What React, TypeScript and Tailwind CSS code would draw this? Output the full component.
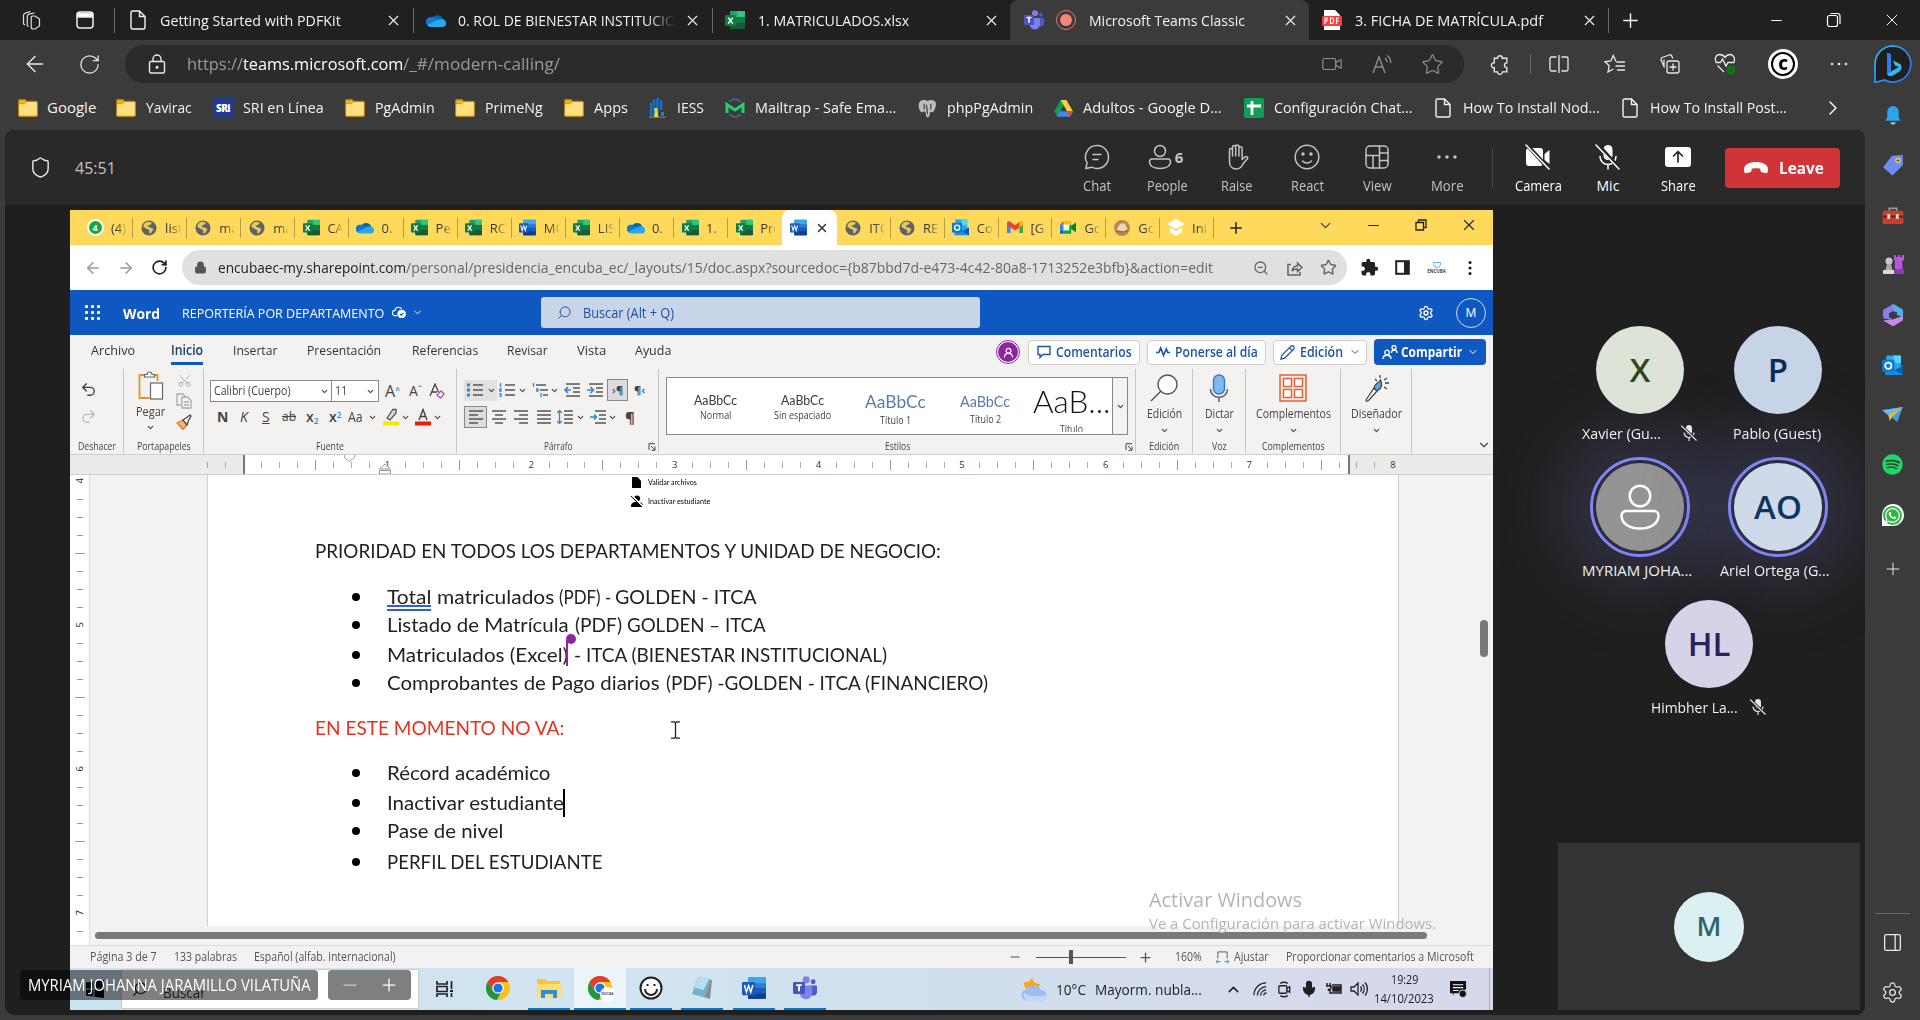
import { useLayoutEffect, useRef, type ReactNode } from 'react';
import {
  ArrowLeft, ArrowRight, ChevronDown, ChevronRight, ChevronUp, Lock, Mic, Minus, PanelRight,
  Plus, RotateCw, Scissors, Search, Settings, Shield, Star, Undo2, Redo2, Video, X, ZoomOut,
} from 'lucide-react';
import { FaSpotify, FaWhatsapp } from 'react-icons/fa';
import { MdExtension } from 'react-icons/md';

/* Label squeezed or stretched to the width of its slot. */
function Fit({ className = '', children }: { className?: string; children: ReactNode }) {
  const outer = useRef<HTMLSpanElement>(null);
  const inner = useRef<HTMLSpanElement>(null);
  useLayoutEffect(() => {
    const fit = () => {
      if (!outer.current || !inner.current) return;
      const w = inner.current.offsetWidth;
      if (w) inner.current.style.transform = `scaleX(${outer.current.clientWidth / w})`;
    };
    fit();
    document.fonts?.ready.then(fit);
  }, []);
  return (
    <span ref={outer} className={`block shrink-0 whitespace-nowrap ${className}`}>
      <span ref={inner} className="inline-block origin-left">{children}</span>
    </span>
  );
}

type P = { className?: string };

/* ---------- product icons ---------- */
const Excel = ({ className = '' }: P) => (
  <svg viewBox="0 0 20 20" className={`shrink-0 ${className}`}>
    <rect x="5" y="1" width="15" height="18" rx="1" fill="#21a366" />
    <rect x="12" y="1" width="8" height="6" fill="#33c481" />
    <rect x="5" y="7" width="15" height="6" fill="#107c41" />
    <rect x="5" y="13" width="15" height="6" rx="1" fill="#185c37" />
    <rect x="0" y="5" width="11" height="11" rx="1" fill="#107c41" />
    <path d="M3.2 7.6l4.6 6M7.8 7.6l-4.6 6" stroke="#fff" strokeWidth="1.5" />
  </svg>
);
const Word = ({ className = '' }: P) => (
  <svg viewBox="0 0 20 20" className={`shrink-0 ${className}`}>
    <rect x="5" y="1" width="15" height="18" rx="1" fill="#2b7cd3" />
    <rect x="5" y="1" width="15" height="5" rx="1" fill="#41a5ee" />
    <rect x="5" y="10" width="15" height="9" rx="1" fill="#185abd" />
    <rect x="5" y="14.5" width="15" height="4.5" rx="1" fill="#103f91" />
    <rect x="0" y="5" width="11" height="11" rx="1" fill="#185abd" />
    <path d="M2 7.5l1.7 6 1.8-5.6 1.8 5.6 1.7-6" stroke="#fff" strokeWidth="1.2" fill="none" />
  </svg>
);
const Outlook = ({ className = '' }: P) => (
  <svg viewBox="0 0 20 20" className={`shrink-0 ${className}`}>
    <rect x="4" y="0.5" width="14" height="15" fill="#28a8ea" />
    <rect x="11" y="0.5" width="7" height="7" fill="#50d9ff" />
    <path d="M3 10l8.5 4.5L20 10v9H3z" fill="#1490df" />
    <path d="M20 10l-8 4.8L20 19z" fill="#0a5ea8" />
    <rect x="0" y="4.5" width="12" height="11.5" rx="1" fill="#0f78d4" />
    <circle cx="6" cy="10.2" r="3" fill="none" stroke="#fff" strokeWidth="1.7" />
  </svg>
);
const OneDrive = ({ className = '' }: P) => (
  <svg viewBox="0 0 20 14" className={`shrink-0 ${className}`}>
    <path d="M6 5a6 5.5 0 0 1 11 1.5L11 10z" fill="#0364b8" />
    <path d="M5 4.2a5 5 0 0 1 4 1l7.5 4L3.5 13A4.4 4.4 0 0 1 5 4.2z" fill="#0f78d4" />
    <path d="M15 5.9c3 0 5 1.5 5 4a3.7 3.7 0 0 1-3.5 4H4.4a4 4 0 0 1-3.2-2L12 6.6a5 5 0 0 1 3-.7z" fill="#28a8ea" />
  </svg>
);
const Teams = ({ className = '' }: P) => (
  <svg viewBox="0 0 20 20" className={`shrink-0 ${className}`}>
    <circle cx="16.8" cy="4.8" r="2" fill="#5059c9" />
    <path d="M14 8h5.2c.4 0 .8.4.8.8v4.7a3.2 3.2 0 0 1-6 1.2z" fill="#5059c9" />
    <circle cx="11" cy="3.2" r="3" fill="#7b83eb" />
    <path d="M6 8h9.2c.5 0 .8.4.8.8v5.4a5.2 5.2 0 0 1-10.4 0V8.4z" fill="#7b83eb" />
    <rect x="0" y="5" width="10" height="10" rx="1" fill="#4b53bc" />
    <path d="M2.6 7.6h4.8M5 7.6v5.2" stroke="#fff" strokeWidth="1.5" />
  </svg>
);
const Globe = ({ className = '' }: P) => (
  <svg viewBox="0 0 18 18" className={`shrink-0 ${className}`}>
    <circle cx="9" cy="9" r="8.5" fill="#5f6368" />
    <path d="M2.500 7.500C3 4 6 2 8.500 2l3.500.8-.5 2-2.500.7-1.500 2 4 1.200 2.500 1.500L12.500 13l-2 2.500L9 14l.5-2.500-3-1.500z" fill="#ffd95b" opacity=".85" />
  </svg>
);
const Folder = ({ className = '' }: P) => (
  <svg viewBox="0 0 20 18" className={`shrink-0 ${className}`}>
    <path d="M.6 2A1.5 1.5 0 0 1 2 .6h4.8l2 1.8H18A1.5 1.5 0 0 1 19.400 4v12a1.400 1.400 0 0 1-1.400 1.400H2A1.400 1.400 0 0 1 .6 16z" fill="#ffdf80" stroke="#b8860b" strokeWidth="1.100" />
    <path d="M1 2c0-.6.4-1 1-1h4.600l1.900 1.700-2 1.900H1z" fill="#f5b81c" stroke="#a97a0a" strokeWidth=".6" />
  </svg>
);
const Page = ({ className = '' }: P) => (
  <svg viewBox="0 0 16 20" fill="none" stroke="#f2f2f2" strokeWidth="1.4" className={`shrink-0 ${className}`}>
    <path d="M9.500 1H2.500A1.500 1.500 0 0 0 1 2.500v15A1.500 1.500 0 0 0 2.500 19h11a1.500 1.500 0 0 0 1.500-1.500V6.500zM9.500 1v5.500H15" />
  </svg>
);
const Drive = ({ className = '' }: P) => (
  <svg viewBox="0 0 20 18" className={`shrink-0 ${className}`}>
    <path d="M7 0h3L10 6 3.500 17.500.2 12z" fill="#0f9d58" />
    <path d="M7 0h6l7 12h-6.200z" fill="#ffcd40" />
    <path d="M6.200 12H20l-3 5.800H3z" fill="#4285f4" />
    <path d="M14 12h6l-3 5.800z" fill="#ea4335" />
  </svg>
);
const Chrome = ({ className = '' }: P) => (
  <svg viewBox="0 0 24 24" className={`shrink-0 ${className}`}>
    <circle cx="12" cy="12" r="12" fill="#fbc116" />
    <path d="M1.600 6A12 12 0 0 1 22.400 6H12l-4.800 8.800z" fill="#e33b2e" />
    <path d="M1.600 6a12 12 0 0 0 9 18l5.600-9.200H7z" fill="#229342" />
    <circle cx="12" cy="12" r="5.800" fill="#fff" />
    <circle cx="12" cy="12" r="4.600" fill="#1a73e8" />
  </svg>
);
const WhatsCount = () => (
  <span className="flex size-[17px] shrink-0 items-center justify-center rounded-full border-2 border-white bg-[#14a84b] text-[9px] font-bold leading-none text-white">4</span>
);
const Gmail = ({ className = '' }: P) => (
  <svg viewBox="0 0 20 16" className={`shrink-0 ${className}`}>
    <path d="M0 2.500V15h4.500V7z" fill="#4285f4" /><path d="M20 2.500V15h-4.500V7z" fill="#34a853" />
    <path d="M0 2.600C0 .6 2.200-.6 4 .8l6 4.500 6-4.500c1.800-1.400 4-.2 4 1.800V5L10 12 0 5z" fill="#ea4335" />
    <path d="M15.500 1.200L16 .8c1.800-1.400 4-.2 4 1.800V5l-4.500 3.200z" fill="#fbbc04" />
  </svg>
);
const Meet = ({ className = '' }: P) => (
  <svg viewBox="0 0 20 16" className={`shrink-0 ${className}`}>
    <path d="M0 4.500L4.500 0v4.500z" fill="#ea4335" /><path d="M4.500 0H14v4.500H4.500z" fill="#fbbc04" />
    <path d="M0 4.500h4.500v7H0z" fill="#2684fc" /><path d="M0 11.500h4.500V16H1.500A1.500 1.500 0 0 1 0 14.500z" fill="#0066da" />
    <path d="M4.500 11.500H11V6l3-2v12H4.500z" fill="#00ac47" /><path d="M14 6l6-4v12l-6-4z" fill="#00832d" />
    <rect x="4.500" y="4.500" width="7" height="7" fill="#fff" />
  </svg>
);

/* ---------- outer browser ---------- */
const Sep = ({ className = '' }: P) => <span className={`w-px shrink-0 ${className}`} />;

function EdgeTab({ className, icon, title, active, sep }: { className: string; icon: ReactNode; title: ReactNode; active?: boolean; sep?: boolean }) {
  return (
    <div className={`flex h-full shrink-0 items-center ${active ? 'rounded-t-lg bg-[#3b3b3b]' : ''} ${className}`}>
      <Sep className={sep ? 'h-[25px] bg-[#6b6b6b]' : 'h-[25px]'} />
      {icon}
      {title}
      <X className="ml-auto size-[17px] shrink-0" strokeWidth={1.600} />
    </div>
  );
}

function TabStrip() {
  return (
    <div className="flex h-10 items-center bg-[#202020] text-[15px] leading-5 text-[#f3f3f3]">
      <div className="flex w-[114px] shrink-0 items-center pl-[22px]">
        <svg viewBox="0 0 20 20" className="size-5" fill="none" stroke="#ddd" strokeWidth="1.200">
          <path d="M12 5.500h2.500l4.500 3v7L14.500 18.500h-1.800a2 2 0 0 1-2-2V8a2 2 0 0 1 1.300-2.500zM8 16L6.800 15V5.800C6.800 4.300 8 3.500 9 3.300l5-.8M4.500 14.500L3 13.500V5c0-1.500 1-2.300 2.200-2.600L10 1" transform="translate(-1.500 .5)" />
        </svg>
        <svg viewBox="0 0 18 18" className="ml-[34px] size-[18px]" fill="none" stroke="#eee" strokeWidth="1.500">
          <rect x="1" y="1" width="16" height="16" rx="3" /><path d="M1.500 2.500h15v3.500h-15z" fill="#fff" />
        </svg>
      </div>
      <EdgeTab sep className="w-[299px] pr-[11px]" icon={<Page className="ml-[15px] h-5 w-4" />} title={<Fit className="-mt-px ml-[14px] w-[181px]">Getting Started with PDFKit</Fit>} />
      <EdgeTab sep className="w-[299px] pr-[11px]" icon={<OneDrive className="ml-3 w-5" />}
        title={<div className="-mt-px ml-3 w-[218px] shrink-0 [mask-image:linear-gradient(90deg,#000_190px,transparent_217px)]"><Fit className="w-[218px]">0. ROL DE BIENESTAR INSTITUCIO</Fit></div>} />
      <EdgeTab sep className="w-[298px] pr-[10px]" icon={<Excel className="ml-3 size-5" />} title={<Fit className="-mt-px ml-[13px] w-[151px]">1. MATRICULADOS.xlsx</Fit>} />
      <EdgeTab active className="w-[299px] pr-[10px]"
        icon={<><Teams className="ml-[13px] size-5" /><span className="ml-3 flex size-5 shrink-0 items-center justify-center rounded-full border-[1.500px] border-[#f1707b]"><span className="size-[12px] rounded-full bg-[#f4867c]" /></span></>}
        title={<Fit className="-mt-px ml-[13px] w-[156px]">Microsoft Teams Classic</Fit>} />
      <EdgeTab className="w-[299px] pr-[10px]"
        icon={<svg viewBox="0 0 20 20" className="ml-3 size-5 shrink-0"><path d="M2 0h11l5 5v15H2z" fill="#fff" /><rect x="0" y="6" width="20" height="10" rx="1" fill="#f83e3e" /><path d="M3 14V8h2v3H3M8.500 8v5.500H10a1.500 1.500 0 0 0 1.500-1.500V9.500A1.500 1.500 0 0 0 10 8zM14.500 14V8H17M14.500 11H17" stroke="#fff" strokeWidth="1.200" fill="none" /></svg>}
        title={<Fit className="-mt-px ml-[13px] w-[188px]">3. FICHA DE MATRÍCULA.pdf</Fit>} />
      <Sep className="h-[25px] bg-[#6b6b6b]" />
      <Plus className="ml-[10px] size-[23px]" strokeWidth={1.500} />
      <Minus className="ml-auto size-[17px]" strokeWidth={1.400} />
      <svg viewBox="0 0 16 16" className="ml-[41px] size-4" fill="none" stroke="#fff" strokeWidth="1.200"><rect x="1.500" y="3.500" width="10" height="11" rx="2" /><path d="M4.500 1.500h7a2.500 2.500 0 0 1 2.500 2.500v8" /></svg>
      <X className="ml-[40px] mr-[18px] size-5" strokeWidth={1.200} />
    </div>
  );
}

function AddressRow() {
  return (
    <div className="flex h-12 items-center text-[#e8e8e8]">
      <ArrowLeft className="ml-[22px] size-[26px]" strokeWidth={1.300} />
      <RotateCw className="ml-[30px] size-[23px]" strokeWidth={1.300} />
      <div className="ml-6 flex h-[38px] w-[1339px] shrink-0 items-center rounded-[19px] bg-[#2b2b2b] text-[17px] leading-6 text-[#9a9a9a]">
        <svg viewBox="0 0 18 20" className="ml-[23px] h-5 w-[18px]" fill="none" stroke="#e8e8e8" strokeWidth="1.400"><rect x="1.500" y="7.500" width="15" height="11.500" rx="1.500" /><path d="M5 7.500V5a4 4 0 0 1 8 0v2.500" /><circle cx="9" cy="13.200" r=".8" fill="#fff" /></svg>
        <Fit className="-mt-px ml-[21px] w-[56px]">https://</Fit>
        <Fit className="-mt-px w-[160px] text-white">teams.microsoft.com</Fit>
        <Fit className="-mt-px w-[157px]">/_#/modern-calling/</Fit>
        <Video className="ml-auto size-[22px] text-[#8d8d8d]" strokeWidth={1.300} />
        <span className="ml-[29px] flex w-[24px] items-start text-[#8d8d8d]">
          <svg viewBox="0 0 22 20" className="h-5 w-[22px]" fill="none" stroke="#8d8d8d" strokeWidth="1.400"><path d="M1 19L7 3l6 16M3.200 13h7.600M13 4a5 5 0 0 1 2 4M15 1.500A8 8 0 0 1 18.500 9" /></svg>
        </span>
        <Star className="ml-[25px] mr-[20px] size-[23px] text-[#8d8d8d]" strokeWidth={1.300} />
      </div>
      <svg viewBox="0 0 20 20" className="ml-[25px] size-[21px]" fill="none" stroke="#e8e8e8" strokeWidth="1.300"><path d="M5 4h3a2.300 2.300 0 0 1 4.600 0H17v4.500a2 2 0 0 0 0 4.500v4h-4.200a2.400 2.400 0 0 1-4.800 0H5v-4a2.300 2.300 0 1 1 0-4.500z" /></svg>
      <Sep className="ml-5 h-5 bg-[#6b6b6b]" />
      <svg viewBox="0 0 20 18" className="ml-[18px] h-[18px] w-5" fill="none" stroke="#e8e8e8" strokeWidth="1.300"><path d="M7.500 2H2.500A1.500 1.500 0 0 0 1 3.500v11A1.500 1.500 0 0 0 2.500 16h5M12.500 2h5A1.500 1.500 0 0 1 19 3.500v11a1.500 1.500 0 0 1-1.500 1.500h-5M10 0v18" /></svg>
      <svg viewBox="0 0 22 20" className="ml-[35px] h-5 w-[22px]" fill="none" stroke="#e8e8e8" strokeWidth="1.300"><path d="M12 7.500L9.300 1.500 6.800 7 1 7.800l4.200 4L4 18l5.300-3M12.500 8H21M11.500 12H21M13 16h8" /></svg>
      <svg viewBox="0 0 20 20" className="ml-[34px] size-5" fill="none" stroke="#e8e8e8" strokeWidth="1.300"><rect x="7" y="7" width="12" height="12" rx="2" /><path d="M13 9.500v7M9.500 13h7M4.500 13.500L1.200 6.200A2 2 0 0 1 2.200 3.500l7-2.500a2 2 0 0 1 2.600 1l1 2.500M4 5.500V12" /></svg>
      <svg viewBox="0 0 22 22" className="ml-[34px] size-[22px]" fill="none" stroke="#e8e8e8" strokeWidth="1.300"><path d="M2 9C0 4 3 1.500 5.500 1.500S10 3 11 4.500C12 3 13.800 1.500 16 1.500c3 0 5.500 3 4 7.500M1.500 9.500h5l2-3.500 3.500 7 2-3.500h6.500M3.500 12.500L10 19" /><circle cx="17" cy="17" r="4.500" fill="#0e7a0d" stroke="none" /><path d="M15 17l1.500 1.500L19 15.500" stroke="#333" strokeWidth="1" /></svg>
      <span className="ml-[32px] flex size-[30px] items-center justify-center rounded-full bg-white"><span className="flex size-[24px] items-center justify-center rounded-full border-[2.500px] border-black text-[15px] font-extrabold leading-none text-black">C</span></span>
      <svg viewBox="0 0 18 4" className="ml-[32px] w-[18px]" fill="#e8e8e8"><circle cx="2" cy="2" r="1.300" /><circle cx="9" cy="2" r="1.300" /><circle cx="16" cy="2" r="1.300" /></svg>
      <svg viewBox="0 0 38 38" className="ml-auto mr-2 size-[38px]">
        <defs><linearGradient id="bing" x1="0" y1="0" x2="1" y2="1"><stop offset="0" stopColor="#2bc3f5" /><stop offset="1" stopColor="#2a6cf0" /></linearGradient></defs>
        <path d="M19 1a18 18 0 1 1-8.500 34L1 37.500V19A18 18 0 0 1 19 1z" fill="#1f1f1f" stroke="url(#bing)" strokeWidth="1.700" />
        <path d="M13 7.500l4 1.500v17.500l-4 3z" fill="#2b7cf0" /><path d="M13 29l14-8.500c1.500 3-.5 5.500-3 7l-5 3c-2 1.200-5 .8-6-1.500z" fill="#36b5f4" /><path d="M19 15.500l6 3c2 1 2.500 2.500 2 4l-6-2z" fill="#1fd0e8" />
      </svg>
    </div>
  );
}

const bookmarks: { icon: ReactNode; gap: string; label: string; size: string }[] = [
  { icon: <Folder className="ml-[18px] h-[18px] w-5" />, gap: 'ml-[9px]', label: 'Google', size: 'w-[49px]' },
  { icon: <Folder className="ml-5 h-[18px] w-5" />, gap: 'ml-[10px]', label: 'Yavirac', size: 'w-[46px]' },
  { icon: <span className="ml-[21px] flex size-5 shrink-0 items-center justify-center bg-[#213a8f] text-[10px] font-extrabold tracking-[-0.600px] text-white">SRi</span>, gap: 'ml-[10px]', label: 'SRI en Línea', size: 'w-[81px]' },
  { icon: <Folder className="ml-[21px] h-[18px] w-5" />, gap: 'ml-[10px]', label: 'PgAdmin', size: 'w-[60px]' },
  { icon: <Folder className="ml-[20px] h-[18px] w-5" />, gap: 'ml-[10px]', label: 'PrimeNg', size: 'w-[58px]' },
  { icon: <Folder className="ml-[21px] h-[18px] w-5" />, gap: 'ml-[10px]', label: 'Apps', size: 'w-[34px]' },
  { icon: <svg viewBox="0 0 17 20" className="ml-[21px] h-5 w-[17px] shrink-0"><path d="M2 19V5M5 19V1M8.500 16V0M12 12V2" stroke="#1473c8" strokeWidth="2.400" /><path d="M0 19.500h17" stroke="#1fa53a" strokeWidth="1.500" /><circle cx="7" cy="11.500" r="1.800" fill="#f5d328" /><path d="M5 19l1-6h2.500l1 6z" fill="#f5d328" /><path d="M12 18v-4h3v4z" fill="#2b7cd3" /></svg>, gap: 'ml-[11px]', label: 'IESS', size: 'w-[27px]' },
  { icon: <svg viewBox="0 0 20 20" className="ml-[21px] size-5 shrink-0" fill="none"><path d="M4 3.500l6-3 6 3M4 16.500l6 3 6-3" stroke="#4a5b80" strokeWidth="2" /><path d="M2 15V6.500l8 5.500 8-5.500V15" stroke="#22d172" strokeWidth="3" /></svg>, gap: 'ml-[10px]', label: 'Mailtrap - Safe Ema...', size: 'w-[141px]' },
  { icon: <svg viewBox="0 0 20 20" className="ml-[22px] size-[19px] shrink-0"><path d="M10 2C6 0 .5 1 .8 7c0 4 2 7 3.500 7 1 0 1.500-1 2.200-1L8 14c.3 3 .5 5.500 2.200 5.500S12.500 17 12.700 13.500c2.300 1 3.300.5 4.300-1.500C18.500 9 19.500 6 18.500 3.500 17 .5 12.500.5 10 2z" fill="#bdbdbd" /><path d="M6.500 5v6M13.500 5v6M9 6l1 10" stroke="#3b3b3b" strokeWidth="1.200" /></svg>, gap: 'ml-[10px]', label: 'phpPgAdmin', size: 'w-[86px]' },
  { icon: <Drive className="ml-[21px] h-[17px] w-[19px]" />, gap: 'ml-[10px]', label: 'Adultos - Google D...', size: 'w-[139px]' },
  { icon: <svg viewBox="0 0 20 20" className="ml-[22px] size-5 shrink-0"><rect width="20" height="20" rx="2" fill="#0f9d58" /><path d="M3 8h14M8 3v14" stroke="#fff" strokeWidth="2.800" /></svg>, gap: 'ml-[10px]', label: 'Configuración Chat...', size: 'w-[139px]' },
  { icon: <Page className="ml-[22px] h-5 w-4" />, gap: 'ml-3', label: 'How To Install Nod...', size: 'w-[137px]' },
  { icon: <Page className="ml-[22px] h-5 w-4" />, gap: 'ml-3', label: 'How To Install Post...', size: 'w-[137px]' },
];

function Bookmarks() {
  return (
    <div className="flex h-[42px] items-center pb-[2px] text-[15px] leading-5 text-[#f3f3f3]">
      {bookmarks.map((b) => (
        <div key={b.label} className="flex shrink-0 items-center">
          {b.icon}
          <Fit className={`-mt-[2px] ${b.gap} ${b.size}`}>{b.label}</Fit>
        </div>
      ))}
      <ChevronRight className="ml-auto mr-[20px] size-6" strokeWidth={1.500} />
    </div>
  );
}

function Sidebar() {
  return (
    <aside className="flex w-[55px] shrink-0 flex-col items-center pt-[17px] text-[#e8e8e8]">
      <svg viewBox="0 0 20 22" className="h-[21px] w-5"><path d="M10 1a6 6 0 0 1 6 6v6l2 3.500H2L4 13V7a6 6 0 0 1 6-6z" fill="#2ba3f0" /><path d="M7 18h6l-1.500 2.500h-3z" fill="#bbb" /></svg>
      <svg viewBox="0 0 20 20" className="mt-[28px] size-[22px]"><path d="M9 1.500L18 1a1 1 0 0 1 1 1v8L9.500 19.500 1 12z" fill="#6f8cf5" /><circle cx="14.500" cy="6" r="2.500" fill="#f7c948" /><path d="M14.500 4.500v3M13 6h3" stroke="#555" strokeWidth=".8" /></svg>
      <svg viewBox="0 0 22 20" className="mt-[30px] h-[19px] w-[22px]"><path d="M7 5V2.500h8V5" fill="none" stroke="#999" strokeWidth="1.800" /><rect x="0" y="5" width="22" height="14" rx="2" fill="#c8402c" /><rect x="0" y="10" width="22" height="2.500" fill="#7d2418" /><rect x="5" y="8.500" width="3" height="5" fill="#ddd" /><rect x="14" y="8.500" width="3" height="5" fill="#ddd" /></svg>
      <svg viewBox="0 0 22 22" className="mt-[28px] size-[22px]"><path d="M12 2h2v2h2V2h2v2h2V2h2v5l-2 1.500.8 8h-8L13 8.500 12 7z" fill="#b556dc" /><circle cx="7" cy="8" r="3.600" fill="#c9c9c9" /><path d="M5 11h4l1.500 6H3.500z" fill="#aaa" /><path d="M1 17h12v4H1z" fill="#d8d8d8" /><path d="M12 17h10v4H12z" fill="#8a3bb5" /></svg>
      <svg viewBox="0 0 22 22" className="mt-[29px] size-[22px]"><path d="M11 0l4 2v6l-5 2v6l-8-1.500A3 3 0 0 1 1 12V6z" fill="#8a7fe8" /><path d="M11 0l9 5a2 2 0 0 1 1 2v6l-6-2V8l-4-3z" fill="#4cb1f0" /><path d="M21 12v3a2 2 0 0 1-1 2l-8 4.700a2 2 0 0 1-2 0L1 16.500l9-1z" fill="#c38ae6" /><path d="M11 7l4 2.300v4L11 15.500l-4-2.300v-4z" fill="#3b3b3b" /></svg>
      <Outlook className="mt-[29px] size-[21px]" />
      <svg viewBox="0 0 22 18" className="mt-[30px] h-[17px] w-[23px]"><path d="M0 4.500L22 1l-6 16-6-5z" fill="#3ba0f2" /><path d="M0 4.500L22 1 7 10z" fill="#61bdf7" /><path d="M22 1L6.500 9.500 8 16l2.500-4z" fill="#f5b52a" /></svg>
      <FaSpotify className="mt-[31px] size-[21px] text-[#1ed760]" />
      <span className="mt-[29px] flex size-[22px] items-center justify-center rounded-full rounded-bl-sm bg-white"><span className="flex size-[19px] items-center justify-center rounded-full bg-[#2cb742]"><FaWhatsapp className="size-[17px] text-white" /></span></span>
      <Plus className="mt-[33px] size-5" strokeWidth={1.200} />
      <span className="mt-auto h-px w-[35px] bg-[#6b6b6b]" />
      <PanelRight className="mt-[18px] size-[21px]" strokeWidth={1.500} />
      <Settings className="mb-[16px] mt-[28px] size-[23px]" strokeWidth={1.300} />
    </aside>
  );
}

/* ---------- call header ---------- */
function CallButton({ className, icon, label, size, bright }: { className: string; icon: ReactNode; label: string; size: string; bright?: boolean }) {
  return (
    <div className={`flex shrink-0 flex-col items-center pt-[5px] ${bright ? 'text-white' : 'text-[#c4c2c0]'} ${className}`}>
      <span className="flex h-[26px] items-center justify-center">{icon}</span>
      <Fit className={`mt-[6px] text-[14px] leading-5 ${size}`}>{label}</Fit>
    </div>
  );
}

const S = ({ children, className = 'size-[26px]' }: { children: ReactNode; className?: string }) => (
  <svg viewBox="0 0 26 26" fill="none" stroke="currentColor" strokeWidth="1.500" strokeLinecap="round" strokeLinejoin="round" className={`shrink-0 ${className}`}>{children}</svg>
);

function CallHeader() {
  return (
    <header className="flex h-[75px] items-center bg-[#292929]">
      <Shield className="ml-[24px] size-[23px] text-[#e6e6e6]" strokeWidth={1.500} />
      <Fit className="ml-[23px] w-[41px] text-[16px] leading-6 text-[#c4c2c0]">45:51</Fit>
      <div className="ml-auto flex items-center">
        <CallButton className="w-[70px]" label="Chat" size="w-[28px]" icon={<S><path d="M13 1.500a11.500 11.500 0 1 1-5.300 21.700L1.800 24.500l1.300-5.600A11.500 11.500 0 0 1 13 1.500zM9 10.500h8M9 15.500h5" /></S>} />
        <CallButton className="w-[70px]" label="People" size="w-[41px]"
          icon={<span className="-ml-1 flex items-center"><S><circle cx="13" cy="7" r="5.500" /><path d="M5 15h16a2.500 2.500 0 0 1 2.500 2.500c0 4.500-4.500 7-10.500 7s-10.500-2.500-10.500-7A2.500 2.500 0 0 1 5 15z" /></S><b className="ml-[2px] text-[15px]">6</b></span>} />
        <CallButton className="w-[70px]" label="Raise" size="w-[32px]" icon={<S><path d="M5.500 15V6a1.500 1.500 0 0 1 3 0V3.200a1.600 1.600 0 0 1 3.200 0V2.500a1.600 1.600 0 0 1 3.200 0v1.800a1.600 1.600 0 0 1 3.200 0V15.500l2.900-2.600c1.200-1 3-.2 2.700 1.300L19 20c-1.500 3-3.300 5-6.500 5-4.500 0-7-3-7-7zM8.500 6v6M11.700 3.500V12M14.900 4.500V12" /></S>} />
        <CallButton className="w-[70px]" label="React" size="w-[33px]" icon={<S><circle cx="13" cy="13" r="11.800" /><path d="M8.500 17a6 6 0 0 0 9 0" /><circle cx="9" cy="10" r="1" fill="currentColor" /><circle cx="17" cy="10" r="1" fill="currentColor" /></S>} />
        <CallButton className="w-[70px]" label="View" size="w-[29px]" icon={<S><rect x="2" y="2" width="22" height="22" rx="4" /><path d="M15.500 2v22M2 11.500h13.500M15.500 9H24M15.500 16.500H24M9 11.500V24" /></S>} />
        <CallButton className="w-[70px]" label="More" size="w-[33px]" icon={<S><circle cx="5" cy="13" r="1" fill="currentColor" /><circle cx="13" cy="13" r="1" fill="currentColor" /><circle cx="21" cy="13" r="1" fill="currentColor" /></S>} />
        <Sep className="ml-[10px] h-10 bg-[#484644]" />
        <CallButton bright className="ml-[10px] w-[70px]" label="Camera" size="w-[47px]" icon={<S><path d="M3.500 4H15a3 3 0 0 1 3 3v12a3 3 0 0 1-3 3H4a3 3 0 0 1-3-3V7a3 3 0 0 1 2.500-3z" fill="currentColor" stroke="none" /><path d="M19.500 10l5-4v14l-5-4z" fill="currentColor" stroke="none" /><path d="M2 1l22 24" stroke="#292929" strokeWidth="4" /><path d="M1 1l23 24" /></S>} />
        <CallButton bright className="w-[70px]" label="Mic" size="w-[23px]" icon={<S><rect x="8.500" y="1" width="9" height="15" rx="4.500" fill="currentColor" stroke="none" /><path d="M5 12.500a8 8 0 0 0 16 0M13 20.500V25" /><path d="M3 1l22 24" stroke="#292929" strokeWidth="4" /><path d="M1 1l23 24" /></S>} />
        <CallButton bright className="w-[70px]" label="Share" size="w-[35px]" icon={<S><rect x="0" y="3" width="26" height="20" rx="3" fill="currentColor" stroke="none" /><path d="M13 18V8M8.500 12L13 7.500l4.500 4.500" stroke="#292929" strokeWidth="1.700" /></S>} />
        <button className="ml-[12px] mr-[25px] flex h-10 w-[115px] items-center rounded bg-[#d13438] text-white">
          <svg viewBox="0 0 24 12" className="ml-[19px] w-6" fill="#fff"><path d="M12 0C6 0 0 2 0 7.500c0 2.500.5 4 2 3.700l4-.9c1.300-.3 1.600-1 1.700-3.500 1.300-.7 7.300-.7 8.600 0 .1 2.500.4 3.200 1.700 3.500l4 .9c1.500.3 2-1.200 2-3.700C24 2 18 0 12 0z" /></svg>
          <Fit className="ml-[11px] w-[45px] text-[16px] font-bold leading-6">Leave</Fit>
        </button>
      </div>
    </header>
  );
}

/* ---------- shared screen ---------- */
const sharedTabs: { icon: ReactNode; text: string }[] = [
  { icon: <WhatsCount />, text: '(4)' },
  { icon: <Globe className="size-4" />, text: 'list' },
  { icon: <Globe className="size-4" />, text: 'ma' },
  { icon: <Globe className="size-4" />, text: 'ma' },
  { icon: <Excel className="size-[17px]" />, text: 'CA' },
  { icon: <OneDrive className="w-[18px]" />, text: '0.' },
  { icon: <Excel className="size-[17px]" />, text: 'Pe' },
  { icon: <Excel className="size-[17px]" />, text: 'RO' },
  { icon: <Word className="size-[17px]" />, text: 'MO' },
  { icon: <Excel className="size-[17px]" />, text: 'LIS' },
  { icon: <OneDrive className="w-[18px]" />, text: '0.' },
  { icon: <Excel className="size-[17px]" />, text: '1.' },
  { icon: <Excel className="size-[17px]" />, text: 'Pro' },
  { icon: <Word className="size-[17px]" />, text: '' },
  { icon: <Globe className="size-4" />, text: 'ITC' },
  { icon: <Globe className="size-4" />, text: 'RE' },
  { icon: <Outlook className="size-[17px]" />, text: 'Co' },
  { icon: <Gmail className="w-4" />, text: '[G' },
  { icon: <Meet className="w-4" />, text: 'Go' },
  { icon: <svg viewBox="0 0 16 16" className="size-4"><circle cx="8" cy="8" r="8" fill="#b98a4d" /><path d="M2.500 10l3-5.500c2-1.500 4-1.500 5.500-.5l2.500 5-3.500 2.500z" fill="#ead7b5" /><path d="M2 10.500c3 2 8 2 12 0" stroke="#8a5f2b" fill="none" /></svg>, text: 'Go' },
  { icon: <svg viewBox="0 0 18 18" className="size-[18px]"><path d="M9 0l9 5-9 5-9-5zM3 8.500l6 3.500 6-3.500V13l-6 4-6-4z" fill="#fff" /></svg>, text: 'Ini' },
];

function SharedTabs() {
  return (
    <div className="flex h-[35px] items-center bg-[#ffd95b] pl-[9px] text-[13px] leading-4 text-[#3c3a2f]">
      {sharedTabs.map((t, i) =>
        t.text === '' ? (
          <div key={i} className="flex h-full w-[55px] shrink-0 items-center rounded-t-lg bg-white">
            <span className="flex w-[33px] shrink-0 justify-center">{t.icon}</span>
            <X className="size-[14px] text-[#333]" strokeWidth={2.500} />
          </div>
        ) : (
          <div key={i} className={`flex h-full shrink-0 items-center ${i < 13 ? 'w-[54.100px]' : 'w-[53.800px]'}`}>
            <span className="flex w-[32px] shrink-0 justify-center">{t.icon}</span>
            <span className="w-[15px] shrink-0 overflow-hidden whitespace-nowrap [mask-image:linear-gradient(90deg,#000_6px,transparent_17px)]">{t.text}</span>
            {i !== 12 && <Sep className="ml-auto h-5 bg-[#b99c43]" />}
          </div>
        ),
      )}
      <Plus className="ml-[13px] size-[18px] text-[#222]" strokeWidth={2} />
      <ChevronDown className="mb-[5px] ml-auto size-[17px] text-[#333]" strokeWidth={1.600} />
      <Minus className="mb-[5px] ml-[31px] size-[17px] text-[#222]" strokeWidth={1.500} />
      <svg viewBox="0 0 12 12" className="mb-[5px] ml-[33px] size-[12px]" fill="none" stroke="#222" strokeWidth="1.300"><path d="M1 3.500h7.500V11H1zM3.500 3.500V1H11v7.500H8.500" /></svg>
      <X className="mb-[5px] ml-[33px] mr-[15px] size-[18px] text-[#222]" strokeWidth={1.500} />
    </div>
  );
}

function SharedAddress() {
  return (
    <div className="flex h-[45px] items-center bg-white">
      <ArrowLeft className="ml-[14px] size-[18px] text-[#999]" />
      <ArrowRight className="ml-[15px] size-[18px] text-[#999]" />
      <RotateCw className="ml-[16px] size-[17px] text-[#222]" strokeWidth={2.400} />
      <div className="ml-[14px] flex h-[35px] w-[1165px] shrink-0 items-center rounded-[18px] bg-[#e0e0e0] text-[15px] leading-5 text-[#63666a]">
        <Lock className="ml-3 size-[13px] text-[#555]" fill="#555" />
        <Fit className="-mt-[2px] ml-[11px] w-[188px] text-[#202124]">encubaec-my.sharepoint.com</Fit>
        <Fit className="-mt-[2px] w-[807px]">{'/personal/presidencia_encuba_ec/_layouts/15/doc.aspx?sourcedoc={b87bbd7d-e473-4c42-80a8-1713252e3bfb}&action=edit'}</Fit>
        <ZoomOut className="ml-[40px] size-4" />
        <svg viewBox="0 0 16 16" className="ml-[18px] size-4" fill="none" stroke="#5f6368" strokeWidth="1.500"><path d="M4 4.500H1v10.500h12v-3M5 11c.5-3.500 2.500-5 5.500-5V3l4.500 4.500-4.500 4V9C8 9 6 9.500 5 11z" /></svg>
        <Star className="ml-[17px] size-[17px]" />
      </div>
      <MdExtension className="ml-[13px] size-[19px] text-[#222]" />
      <svg viewBox="0 0 15 15" className="ml-[16px] size-[15px]"><rect x="1.200" y="1.200" width="12.600" height="12.600" fill="none" stroke="#222" strokeWidth="2" /><rect x="9" y="1" width="5" height="13" fill="#222" /></svg>
      <span className="ml-[17px] flex w-[19px] flex-col items-center text-[4.500px] font-bold leading-[6px] text-[#2b4c63]"><span className="h-[6px] w-2 rounded-b border border-[#66b5d8]" />ENCUBA</span>
      <svg viewBox="0 0 4 16" className="ml-[22px] h-4 w-1" fill="#222"><circle cx="2" cy="2.500" r="1.600" /><circle cx="2" cy="8" r="1.600" /><circle cx="2" cy="13.500" r="1.600" /></svg>
    </div>
  );
}

function WordHeader() {
  return (
    <div className="flex h-[45px] items-center bg-[#1058c1] text-white">
      <span className="ml-[15px] grid size-[15px] shrink-0 grid-cols-3 gap-[3px]">{Array.from({ length: 9 }, (_, i) => <i key={i} className="size-[3px] rounded-[1px] bg-white" />)}</span>
      <Fit className="ml-[23px] w-[37px] text-[15px] font-bold leading-5">Word</Fit>
      <Fit className="ml-[22px] w-[202px] text-[13.500px] leading-5">REPORTERÍA POR DEPARTAMENTO</Fit>
      <svg viewBox="0 0 16 14" className="ml-2 w-[14px]" fill="none" stroke="#fff" strokeWidth="1.300"><path d="M6 11H3.500A3 3 0 0 1 3.500 5 4 4 0 0 1 11 3.500" /><circle cx="11" cy="9" r="4.200" fill="#fff" /><path d="M9 9l1.500 1.500L13 8" stroke="#1058c1" /></svg>
      <ChevronDown className="ml-[6px] size-[11px]" />
      <div className="ml-[118px] flex h-[31px] w-[439px] items-center rounded-[3px] bg-[#c8d4e8] text-[14px] leading-5 text-[#1f4fa0]">
        <Search className="ml-[16px] size-[15px] -scale-x-100" strokeWidth={1.500} />
        <Fit className="ml-[11px] w-[91px]">Buscar (Alt + Q)</Fit>
      </div>
      <Settings className="ml-auto size-[16px]" />
      <span className="ml-[22px] mr-[7px] flex size-[30px] items-center justify-center rounded-full border border-white/80 text-[12px]">M</span>
    </div>
  );
}

const menus: [string, string, boolean?][] = [
  ['Archivo', 'ml-[21px] w-[44px]'], ['Inicio', 'ml-[36px] w-[32px]', true], ['Insertar', 'ml-[30px] w-[44px]'], ['Presentación', 'ml-[30px] w-[74px]'],
  ['Referencias', 'ml-[31px] w-[66px]'], ['Revisar', 'ml-[29px] w-[41px]'], ['Vista', 'ml-[29px] w-[29px]'], ['Ayuda', 'ml-[29px] w-[36px]'],
];

const Chev = ({ className = '' }: P) => <ChevronDown className={`size-[9px] shrink-0 text-[#444] ${className}`} strokeWidth={3} />;

function MenuRow() {
  return (
    <div className="flex h-[34px] items-center text-[13.500px] leading-[18px] text-[#333]">
      {menus.map(([label, cls, on]) => (
        <div key={label} className={`flex h-[30px] shrink-0 items-center self-start ${cls} ${on ? 'border-b-[3px] border-[#1058c1] pt-[2px] font-semibold text-[#1b3d70]' : ''}`}>
          <Fit className="w-full">{label}</Fit>
        </div>
      ))}
      <span className="ml-auto flex size-6 items-center justify-center rounded-full border border-[#8b2aa0] bg-white"><span className="flex size-5 items-center justify-center rounded-full bg-[#8e24a0]"><svg viewBox="0 0 12 12" className="size-[11px]" fill="none" stroke="#fff" strokeWidth="1.300"><circle cx="6" cy="4" r="2.600" /><path d="M1.500 11.500c0-6 9-6 9 0" /></svg></span></span>
      <div className="flex items-center gap-[7px] pl-[8px] pr-[7px] font-semibold text-[#1f55a8]">
        <span className="flex h-[25px] w-[112px] items-center rounded-sm border border-[#d0cecc] bg-white">
          <svg viewBox="0 0 14 14" className="ml-[8px] size-[14px]" fill="none" stroke="#1f55a8" strokeWidth="1.400"><path d="M1 1.500h12v8H6L3 12.500V9.500H1z" /></svg>
          <Fit className="ml-[5px] w-[76px]">Comentarios</Fit>
        </span>
        <span className="flex h-[25px] w-[119px] items-center rounded-sm border border-[#d0cecc] bg-white">
          <svg viewBox="0 0 16 12" className="ml-[8px] w-[15px]" fill="none" stroke="#1f55a8" strokeWidth="1.700"><path d="M0 7h3l2-5 3 8 3-7 1.500 4H15" /></svg>
          <Fit className="ml-[4px] w-[83px]">Ponerse al día</Fit>
        </span>
        <span className="flex h-[25px] w-[94px] items-center rounded-sm border border-[#d0cecc] bg-white">
          <svg viewBox="0 0 16 16" className="ml-[6px] size-[15px]" fill="none" stroke="#1f55a8" strokeWidth="1.400"><path d="M1 15l1-4L11.500 1.500a1.800 1.800 0 0 1 3 3L5 14zM10 3l3 3" /></svg>
          <Fit className="ml-[5px] w-[43px]">Edición</Fit>
          <ChevronDown className="ml-[6px] size-3" />
        </span>
        <span className="flex h-[26px] w-[112px] items-center rounded-sm bg-[#1058c1] font-bold text-white">
          <svg viewBox="0 0 16 14" className="ml-[8px] w-[16px]" fill="none" stroke="#fff" strokeWidth="1.300"><circle cx="5" cy="7.500" r="2.300" /><path d="M1 14c0-5 8-5 8 0" /><circle cx="12" cy="2.500" r="2" /><path d="M9.500 8c0-4 5.500-4 5.500 0" /></svg>
          <Fit className="ml-[3px] w-[61px]">Compartir</Fit>
          <ChevronDown className="ml-[5px] size-3" />
        </span>
      </div>
    </div>
  );
}

function Group({ className, label, size, launcher, children }: { className: string; label: string; size: string; launcher?: boolean; children: ReactNode }) {
  return (
    <div className={`relative flex h-[84px] shrink-0 flex-col border-r border-[#c8c6c4] ${className}`}>
      <div className="h-[71px]">{children}</div>
      <div className="flex justify-center text-[10.500px] leading-[13px] text-[#444]"><Fit className={size}>{label}</Fit></div>
      {launcher && (
        <svg viewBox="0 0 8 8" className="absolute bottom-[2px] right-[2px] size-[8px]" fill="none" stroke="#444"><path d="M1 7V.7h6M3 3l4 4M7 3.500V7.300H3.500" /></svg>
      )}
    </div>
  );
}

/* Paragraph-style line glyphs. */
function Lines({ kind }: { kind: 'bullet' | 'num' | 'multi' | 'out' | 'in' | 'left' | 'center' | 'right' | 'just' | 'space' | 'ind' }) {
  const blue = '#2b88d8';
  const g = '#555';
  return (
    <svg viewBox="0 0 16 14" className="h-[14px] w-4 shrink-0" fill="none" stroke={g} strokeWidth="1.300">
      {kind === 'bullet' && <><path d="M6 2h10M6 7h10M6 12h10" /><path d="M0 2h3M0 7h3M0 12h3" stroke={blue} strokeWidth="3" /></>}
      {kind === 'num' && <><path d="M6 2h10M6 7h10M6 12h10" /><path d="M1.500 0v4M0 6h2v2H0M0 11h2v3H0" stroke={blue} /></>}
      {kind === 'multi' && <><path d="M4 2h10M8 7h8M11 12h5" /><path d="M1.500 0v4M4 6h2v2H4M9 10v4" stroke={blue} /></>}
      {(kind === 'out' || kind === 'in') && <><path d="M2 1h14M9 5h7M9 9h7M2 13h14" />{kind === 'out' ? <path d="M7 7H1M4 4L1 7l3 3" stroke={blue} strokeWidth="1.600" /> : <path d="M0 7h6M3.500 4L6.500 7l-3 3" stroke={blue} strokeWidth="1.600" />}</>}
      {kind === 'left' && <path d="M1 1h14M1 5h9M1 9h14M1 13h9" />}
      {kind === 'center' && <path d="M1 1h14M4 5h8M1 9h14M4 13h8" />}
      {kind === 'right' && <path d="M1 1h14M6 5h9M1 9h14M6 13h9" />}
      {kind === 'just' && <path d="M1 1h14M1 5h14M1 9h14M1 13h14" />}
      {kind === 'space' && <><path d="M7 1h9M7 5h9M7 9h9M7 13h9" /><path d="M2.500 0v14M0 3L2.500.5 5 3M0 11l2.500 2.500L5 11" stroke={blue} /></>}
      {kind === 'ind' && <><path d="M5 1h11M9 5h7M9 9h7M5 13h11" /><path d="M0 7h6M4 4.500L6.500 7 4 9.500" stroke={blue} strokeWidth="1.600" /></>}
    </svg>
  );
}

const bigTools: { group: string; label: string; gsize: string; tool: string; tsize: string; icon: ReactNode }[] = [
  { group: 'w-[57px]', label: 'Edición', gsize: 'w-[30px]', tool: 'Edición', tsize: 'w-[35px]', icon: <svg viewBox="0 0 28 28" className="size-7" fill="none" stroke="#555" strokeWidth="1.400"><circle cx="17.500" cy="10.500" r="9.500" fill="#fff" /><path d="M11 17L1 27" /></svg> },
  { group: 'w-[53px]', label: 'Voz', gsize: 'w-[15px]', tool: 'Dictar', tsize: 'w-[29px]', icon: <svg viewBox="0 0 28 28" className="size-7" fill="none" stroke="#555" strokeWidth="1.400"><rect x="8.500" y="1" width="11" height="19" rx="5.500" fill="#83b9ec" stroke="#2b7cd3" /><path d="M5.500 15c0 11 17 11 17 0M14 23v5" /></svg> },
  { group: 'w-[95px]', label: 'Complementos', gsize: 'w-[63px]', tool: 'Complementos', tsize: 'w-[75px]', icon: <svg viewBox="0 0 28 28" className="size-7" fill="none" stroke="#d9653b" strokeWidth="1.500"><rect x="1" y="1" width="26" height="26" fill="#fbe9e2" /><rect x="4.500" y="4.500" width="8" height="8" fill="#fff" /><rect x="15.500" y="4.500" width="8" height="8" fill="#fff" /><rect x="4.500" y="15.500" width="8" height="8" fill="#fff" /><rect x="15.500" y="15.500" width="8" height="8" fill="#fff" /></svg> },
  { group: 'w-[71px]', label: '', gsize: 'w-[1px]', tool: 'Diseñador', tsize: 'w-[51px]', icon: <svg viewBox="0 0 28 28" className="size-7" fill="none" stroke="#444" strokeWidth="1.300"><path d="M4 26l8-12 3 3-8 9c-1 1-3 2-3 0z" fill="#fff" /><path d="M12 14c0-4 4-4 6.500-8 1 3 2 5 0 8-1.500 2-3 2-3.500 3z" fill="#5ba7e6" /><path d="M13 5l2 2M18 1v3M25 4l-3 2M23 9h4M22 13l3 2" /></svg> },
];

const styles: { box: string; text: string; fit: string; sample: string; label: string; lfit: string }[] = [
  { box: 'ml-[27px] pt-[13px]', text: 'text-[13.500px] leading-[18px] text-[#3a3a3a]', fit: 'w-[43px]', sample: 'AaBbCc', label: 'Normal', lfit: 'w-[31px] -mt-px' },
  { box: 'ml-[37px] pt-[13px]', text: 'text-[13.500px] leading-[18px] text-[#3a3a3a]', fit: 'w-[43px]', sample: 'AaBbCc', label: 'Sin espaciado', lfit: 'w-[57px] -mt-px' },
  { box: 'ml-[34px] pt-[14px]', text: 'mb-[3px] text-[18px] leading-[18px] text-[#5b7bb0]', fit: 'w-[61px]', sample: 'AaBbCc', label: 'Título 1', lfit: 'w-[31px]' },
  { box: 'ml-[34px] pt-[14px]', text: 'mb-[2px] text-[15.500px] leading-[18px] text-[#5b7bb0]', fit: 'w-[50px]', sample: 'AaBbCc', label: 'Título 2', lfit: 'w-[31px]' },
  { box: 'ml-[23px] pt-[9px]', text: 'mb-[6px] text-[31px] font-light leading-[29px] text-[#111]', fit: 'w-[77px]', sample: 'AaB...', label: 'Título', lfit: 'w-[23px] h-[10px] overflow-hidden' },
];

function Ribbon() {
  return (
    <div className="h-[120px] border-b border-[#d0cecc] bg-[#f3f2f1]">
      <MenuRow />
      <div className="flex h-[85px] text-[#444]">
        <Group className="w-[54px]" label="Deshacer" size="w-[38px]">
          <div className="flex flex-col items-center gap-[10px] pr-4 pt-[12px]"><Undo2 className="size-[17px]" /><Redo2 className="size-[17px] text-[#bbb]" /></div>
        </Group>
        <Group className="w-[80px]" label="Portapapeles" size="w-[54px]">
          <div className="flex pl-[12px]">
            <div className="flex w-[29px] flex-col items-center">
              <svg viewBox="0 0 26 30" className="mt-[2px] h-[30px] w-[27px]" fill="none" stroke="#e3962e" strokeWidth="1.800"><path d="M8 4H2v23h10M16 4h4v6" /><path d="M7 6V3.500h2.500a2.500 2.500 0 0 1 5 0H17V6z" stroke="#666" strokeWidth="1.200" fill="#fff" /><rect x="13" y="12" width="12" height="16" fill="#fff" stroke="#666" strokeWidth="1.200" /></svg>
              <Fit className="mt-[3px] w-[29px] text-[12.500px] leading-[15px]">Pegar</Fit>
              <Chev className="mt-[4px]" />
            </div>
            <div className="ml-[11px] flex flex-col items-center gap-[5px] pt-[4px]">
              <Scissors className="size-[15px] -rotate-90 text-[#aaa]" strokeWidth={1.500} />
              <svg viewBox="0 0 16 16" className="size-4" fill="none" stroke="#aaa" strokeWidth="1.300"><path d="M5 12H1V1h6l2 2M6 4h5.500L15 7.500V15H6zM8 9h5M8 12h5" /></svg>
              <svg viewBox="0 0 16 16" className="size-4" fill="none"><path d="M1 9l6-3 4 5-4 4.500z" fill="#f5b26b" stroke="#d9772b" strokeWidth="1.300" /><path d="M7 6l3-2 4-3 1 1-2.500 4.500L11 11z" stroke="#444" strokeWidth="1.300" fill="#fff" /></svg>
            </div>
          </div>
        </Group>
        <Group className="w-[253px]" label="Fuente" size="w-[28px]">
          <div className="flex items-center pl-[6px] pt-[11px]">
            <div className="flex h-[22px] w-[169px] items-center border border-[#8a8886] bg-white text-[12.500px] leading-[16px]">
              <Fit className="ml-[3px] w-[77px]">Calibri (Cuerpo)</Fit><Chev className="ml-[29px]" />
              <span className="ml-[2px] flex h-full w-[47px] items-center border-l border-[#8a8886]"><Fit className="ml-[3px] w-[12px]">11</Fit><Chev className="ml-auto mr-[3px]" /></span>
            </div>
            <span className="ml-[6px] w-[17px] text-[16px] leading-none">A<sup className="text-[8px] font-bold text-[#2b88d8]">^</sup></span>
            <span className="ml-[7px] w-[17px] text-[14px] leading-none">A<sup className="text-[8px] font-bold text-[#2b88d8]">ˇ</sup></span>
            <svg viewBox="0 0 16 16" className="ml-[3px] size-4" fill="none" stroke="#444" strokeWidth="1.300"><path d="M1 13L6 1l3.500 8M3 9h5" /><path d="M8 12l4-4 3 3-3.500 4z" fill="#fff" stroke="#a04fb8" /></svg>
          </div>
          <div className="flex items-center pl-[13px] pt-[5px] text-[14px] leading-[20px]">
            <b className="w-[23px]">N</b><i className="w-[22px]">K</i><span className="w-[20px] underline">S</span><span className="w-[24px] text-[12px] line-through">ab</span>
            <span className="w-[23px] font-semibold">x<sub className="text-[8px] text-[#2b88d8]">2</sub></span><span className="w-[19px] font-semibold">x<sup className="text-[8px] text-[#2b88d8]">2</sup></span>
            <Fit className="w-[15px]">Aa</Fit><Chev className="ml-[5px]" />
            <svg viewBox="0 0 16 18" className="ml-[6px] h-[18px] w-4" fill="none" stroke="#555" strokeWidth="1.300"><path d="M4 10l6-8.500h3V5L7 12z" fill="#ddd" /><path d="M0 15.500h16" stroke="#f7e600" strokeWidth="4" /></svg>
            <Chev className="ml-[2px]" />
            <svg viewBox="0 0 16 18" className="ml-[5px] h-[18px] w-4" fill="none" stroke="#444" strokeWidth="1.400"><path d="M4 12L8 1.500 12 12M5.500 8.500h5" /><path d="M0 15.500h16" stroke="#f01a0a" strokeWidth="4" /></svg>
            <Chev className="ml-[2px]" />
          </div>
        </Group>
        <Group className="w-[202px]" label="Párrafo" size="w-[28px]" launcher>
          <div className="mt-[10px] flex h-[22px] items-center pl-[7px]">
            <span className="flex h-[21px] w-[33px] items-center bg-[#e3e1df] pl-[3px]"><Lines kind="bullet" /><Chev className="ml-[4px]" /></span>
            <span className="ml-[2px] flex items-center"><Lines kind="num" /><Chev className="ml-[3px]" /></span>
            <span className="ml-[5px] flex items-center"><Lines kind="multi" /><Chev className="ml-[2px]" /></span>
            <span className="ml-[5px]"><Lines kind="out" /></span><span className="ml-[7px]"><Lines kind="in" /></span>
            <span className="ml-[4px] flex h-[22px] w-[21px] items-center justify-center border border-[#8a8886] bg-[#dedcda] text-[11px] font-bold"><span className="text-[#2b88d8]">›</span>¶</span>
            <span className="ml-[6px] text-[11px] font-bold">¶<span className="text-[#2b88d8]">‹</span></span>
          </div>
          <div className="mt-[5px] flex h-[22px] items-center pl-[7px]">
            <span className="flex h-[22px] w-[23px] items-center justify-center border border-[#8a8886] bg-[#dedcda]"><Lines kind="left" /></span>
            <span className="ml-[4px]"><Lines kind="center" /></span><span className="ml-[6px]"><Lines kind="right" /></span><span className="ml-[7px]"><Lines kind="just" /></span>
            <span className="ml-[5px] flex items-center"><Lines kind="space" /><Chev className="ml-[3px]" /></span>
            <span className="ml-[5px] flex items-center"><Lines kind="ind" /><Chev className="ml-[2px]" /></span>
            <span className="ml-[8px] text-[15px] font-bold leading-none">¶</span>
          </div>
        </Group>
        <Group className="w-[477px]" label="Estilos" size="w-[25px]" launcher>
          <div className="ml-[7px] mt-[8px] flex h-[58px] w-[462px] border border-[#8a8886] bg-white">
            {styles.map((s) => (
              <div key={s.label} className={`flex shrink-0 flex-col items-center ${s.box}`}>
                <Fit className={`font-['Lato',sans-serif] ${s.text} ${s.fit}`}>{s.sample}</Fit>
                <Fit className={`text-[11px] leading-[13px] text-[#444] ${s.lfit}`}>{s.label}</Fit>
              </div>
            ))}
            <span className="ml-auto flex w-[15px] items-center justify-center border-l border-[#8a8886] bg-[#f3f2f1]"><Chev /></span>
          </div>
        </Group>
        {bigTools.map((t) => (
          <Group key={t.tool} className={t.group} label={t.label} size={t.gsize}>
            <div className="flex flex-col items-center pt-[5px]">
              {t.icon}
              <Fit className={`mt-[4px] text-[12.500px] leading-[16px] ${t.tsize}`}>{t.tool}</Fit>
              <Chev className="mt-[4px]" />
            </div>
          </Group>
        ))}
        <ChevronDown className="ml-auto mr-[2px] mt-[69px] size-[14px]" />
      </div>
    </div>
  );
}

function HorizontalRuler() {
  return (
    <div className="flex h-5 items-center overflow-hidden border-b border-[#d0cecc] bg-[linear-gradient(90deg,#ebebeb_0_173px,#777_173px_175px,#fff_175px_1278px,#777_1278px_1280px,#ebebeb_1280px)] pl-[129px] text-[9.500px] leading-none text-[#333]">
      {Array.from({ length: 67 }, (_, i) => i - 2).map((k) => (
        <span key={k} className="relative flex h-[10px] w-[17.960px] shrink-0 items-center justify-center">
          {k > 0 && k % 8 === 0 ? k / 8 : k === 0 ? null : <i className={k % 4 === 0 ? 'h-[10px] w-px bg-[#999]' : 'h-[6px] w-px bg-[#aaa]'} />}
          {k === 8 && (
            <>
              <svg viewBox="0 0 12 8" className="absolute -top-[5px] left-[-35px] w-[11px]" fill="#fff" stroke="#999"><path d="M.5 0v3L6 7l5.500-4V0" /></svg>
              <svg viewBox="0 0 12 12" className="absolute left-0 top-[3px] w-[12px]" fill="#fff" stroke="#999"><path d="M.5 6L6 1l5.500 5zM.5 7.500h11v3.500H.5z" /></svg>
            </>
          )}
        </span>
      ))}
    </div>
  );
}

function VerticalRuler() {
  return (
    <div className="h-full w-5 shrink-0 overflow-hidden border-r border-[#ddd] bg-white text-[9.500px] leading-none text-[#222]">
      <div className="-mt-[3px] flex flex-col">
        {Array.from({ length: 26 }, (_, k) => (
          <span key={k} className="flex h-[18px] shrink-0 items-center justify-center">
            {k % 8 === 0 ? <span className="-rotate-90">{4 + k / 8}</span> : <i className={k % 4 === 0 ? 'h-px w-[10px] bg-[#999]' : 'h-px w-[6px] bg-[#999]'} />}
          </span>
        ))}
      </div>
    </div>
  );
}

/* One bullet line; each part is a run of text with its own slot. */
function Item({ className = '', parts, extra }: { className?: string; parts: [string, string][]; extra?: ReactNode }) {
  return (
    <li className={`flex h-7 items-center ${className}`}>
      <span className="ml-[144px] size-[8px] shrink-0 rounded-full bg-black" />
      <span className="relative ml-[27px] flex">
        {parts.map(([cls, text]) => <Fit key={text} className={cls}>{text}</Fit>)}
        {extra}
      </span>
    </li>
  );
}

function Document() {
  return (
    <div className="relative flex h-[470px] bg-[#f2f2f2]">
      <VerticalRuler />
      <div className="flex-1">
        <div className="flex h-[451px]">
          <div className="ml-[117px] w-[1192px] border-x border-[#cfcfcf] bg-white font-['Lato',sans-serif] text-[19.500px] leading-7 text-[#222] [font-variant-ligatures:none]">
            <div className="flex h-[14px] items-center text-[7px] leading-none text-black"><svg viewBox="0 0 10 12" className="ml-[424px] h-[11px] w-[9px]"><path d="M0 0h6l4 4v8H0z" /></svg><Fit className="ml-[7px] w-[49px]">Validar archivos</Fit></div>
            <div className="mt-[5px] flex h-[14px] items-center text-[7px] leading-none text-black"><svg viewBox="0 0 12 12" className="ml-[423px] size-[12px]"><circle cx="6" cy="3.500" r="3" /><path d="M0 12c0-5 3-5 6-5s6 0 6 5z" /><path d="M0 0l12 12" stroke="#fff" strokeWidth="2" /><path d="M0 1l11 11" stroke="#000" /></svg><Fit className="ml-[5px] w-[62px]">Inactivar estudiante</Fit></div>
            <Fit className="ml-[107px] mt-[29px] w-[626px]">PRIORIDAD EN TODOS LOS DEPARTAMENTOS Y UNIDAD DE NEGOCIO:</Fit>
            <ul>
              <Item className="mt-[18px]" parts={[['w-[44px]', 'Total'], ['ml-[6px] w-[117px]', 'matriculados'], ['ml-[5px] w-[52px]', '(PDF) -'], ['ml-[4px] w-[142px]', 'GOLDEN - ITCA']]}
                extra={<span className="absolute left-0 top-[22px] h-[6px] w-[44px] border-y-2 border-[#2f5de0]" />} />
              <Item parts={[['w-[182px]', 'Listado de Matrícula'], ['ml-[6px] w-[47px]', '(PDF)'], ['ml-[5px] w-[139px]', 'GOLDEN – ITCA']]} />
              <Item className="mt-[2px]" parts={[['w-[181px]', 'Matriculados (Excel)'], ['ml-[6px] w-[313px]', '- ITCA (BIENESTAR INSTITUCIONAL)']]}
                extra={<span className="absolute -top-[1px] left-[179px] h-[26px] w-[2px] bg-[#8e24a0]"><i className="absolute -top-[6px] left-0 size-[10px] rounded-full bg-[#8e24a0]" /></span>} />
              <Item parts={[['w-[273px]', 'Comprobantes de Pago diarios'], ['ml-[6px] w-[322px]', '(PDF) -GOLDEN - ITCA (FINANCIERO)']]} />
            </ul>
            <div className="relative mt-[17px] text-[#e8321f]">
              <Fit className="ml-[107px] w-[249px]">EN ESTE MOMENTO NO VA:</Fit>
              <svg viewBox="0 0 9 18" className="absolute left-[463px] top-[7px] h-[18px] w-[9px]" fill="none" stroke="#222" strokeWidth="1.300"><path d="M0 .8h3.500L4.500 2l1-1.200H9M4.500 2v14M0 17.200h3.500l1-1.200 1 1.200H9" /></svg>
            </div>
            <ul>
              <Item className="mt-[17px]" parts={[['w-[164px]', 'Récord académico']]} />
              <Item className="mt-[2px]" parts={[['w-[177px]', 'Inactivar estudiante']]} extra={<span className="absolute left-[176px] top-0 h-7 w-[1.500px] bg-black" />} />
              <Item parts={[['w-[116px]', 'Pase de nivel']]} />
              <Item className="mt-[3px]" parts={[['w-[215px]', 'PERFIL DEL ESTUDIANTE']]} />
            </ul>
          </div>
          <span className="ml-[81px] mt-[145px] h-[37px] w-2 rounded bg-[#777]" />
        </div>
        <div className="ml-[5px] mt-[6px] h-[7px] w-[1332px] rounded bg-[#7a7879]" />
      </div>
      <div className="absolute left-[1079px] top-[412px] text-[#b4b4b4]">
        <Fit className="w-[153px] text-[20px] leading-[26px]">Activar Windows</Fit>
        <Fit className="w-[287px] text-[15px] leading-5">Ve a Configuración para activar Windows.</Fit>
      </div>
    </div>
  );
}

function StatusBar() {
  return (
    <div className="flex h-[23px] items-center border-t border-[#ddd] bg-[#f3f2f1] text-[12px] leading-4 text-[#555]">
      <Fit className="ml-[20px] w-[67px]">Página 3 de 7</Fit>
      <Fit className="ml-[17px] w-[63px]">133 palabras</Fit>
      <Fit className="ml-[17px] w-[142px]">Español (alfab. internacional)</Fit>
      <Minus className="ml-[612px] size-[14px]" />
      <div className="ml-[14px] flex w-[90px] items-center"><span className="h-px w-[33px] bg-[#555]" /><span className="h-[14px] w-1 bg-[#555]" /><span className="h-px flex-1 bg-[#555]" /></div>
      <Plus className="ml-[12px] size-[15px]" />
      <Fit className="ml-[22px] w-[27px]">160%</Fit>
      <svg viewBox="0 0 14 14" className="ml-[14px] size-[13px]" fill="none" stroke="#555"><path d="M2 8V1h10v7" /><path d="M0 11.500h5M9 11.500h5M2 9.500l-2 2 2 2M12 9.500l2 2-2 2" stroke="#2b88d8" /></svg>
      <Fit className="ml-[5px] w-[35px]">Ajustar</Fit>
      <Fit className="ml-[17px] w-[188px]">Proporcionar comentarios a Microsoft</Fit>
    </div>
  );
}

const apps: { icon: ReactNode; open?: boolean; active?: boolean }[] = [
  { icon: <Chrome className="size-6" /> },
  { icon: <svg viewBox="0 0 24 22" className="w-6"><path d="M0 2h8l2 2h13v15H0z" fill="#f8c537" /><path d="M0 7h24v13H0z" fill="#ffdd6e" /><path d="M4 21v-8h16v8h-4v-4H8v4z" fill="#2b8fe0" /></svg>, open: true },
  { icon: <span className="relative"><Chrome className="size-6" /><span className="absolute -bottom-[2px] left-[12px] flex size-[15px] items-center justify-center rounded-full bg-white text-[3px] font-bold text-[#456]">ENCUBA</span></span>, open: true, active: true },
  { icon: <svg viewBox="0 0 24 24" className="size-6" fill="#fff" stroke="#222" strokeWidth="2"><circle cx="12" cy="12" r="10.500" /><path d="M6 13a6 6 0 0 0 12 0" fill="none" /><path d="M8.500 8v2M15.500 8v2" /></svg>, open: true },
  { icon: <svg viewBox="0 0 24 24" className="size-6"><path d="M9 2l13 2-2 19-6-2z" fill="#8a8d86" /><path d="M8 1l13 2.500-6 18L2 18z" fill="#6fb3cc" /><path d="M8 1l11 2-5.500 11L4.500 11.500z" fill="#b5e0ec" /></svg>, open: true },
  { icon: <Word className="size-6" />, open: true },
  { icon: <Teams className="size-6" />, open: true },
];

function Taskbar() {
  return (
    <div className="flex h-[42px] items-center bg-[linear-gradient(90deg,#cbe3f0,#d1e4ef_35%,#cfe2ee_50%,#d3dcec_75%,#d6d9eb)] text-[#1d1d1d]">
      <svg viewBox="0 0 18 18" className="ml-[16px] size-[18px]"><path d="M0 2.500L7.500 1.500V8.500H0zM8.500 1.300L18 0v8.500H8.500zM0 9.500h7.500v7L0 15.500zM8.500 9.500H18V18L8.500 16.700z" /></svg>
      <div className="ml-[17px] flex h-10 w-[298px] items-center border border-[#ccc] bg-white text-[15px] leading-5">
        <Search className="ml-[10px] size-4 -scale-x-100" />
        <Fit className="ml-[15px] mt-[5px] w-[43px] text-[#333]">Buscar</Fit>
      </div>
      <svg viewBox="0 0 18 18" className="ml-[17px] size-[18px]" fill="none" stroke="#222" strokeWidth="1.700"><path d="M1 1v3h10V1M1 17v-3h10v3M1 6.500h10v5H1zM15.500 1v8M15.500 13v4" /><path d="M14 10h3v2h-3z" fill="#222" stroke="none" /></svg>
      <div className="ml-[18px] flex h-full">
        {apps.map((a, i) => (
          <span key={i} className={`flex h-full w-[51.200px] flex-col items-center ${a.active ? 'bg-[#ebf4f9]' : ''}`}>
            <span className="flex h-10 items-center">{a.icon}</span>
            {a.open && <i className={a.active ? 'h-[2px] w-full bg-[#0078d7]' : 'h-[2px] w-[42px] bg-[#0078d7]'} />}
          </span>
        ))}
      </div>
      <svg viewBox="0 0 26 26" className="ml-[191px] size-[26px]"><path d="M11 0c0 5 3 8 8 8-1 5-5 6-8 6-6 0-9-4-8-8 4 1 8-2 8-6z" fill="#f5a623" /><path d="M7 25a6 6 0 0 1-1-12 8 8 0 0 1 14 1 5.500 5.500 0 0 1 0 11z" fill="#9dbcf0" /><path d="M7 25a6 6 0 0 1-4-8c6 4 14 4 22 2a5.500 5.500 0 0 1-5 6z" fill="#c3d6f8" /></svg>
      <Fit className="ml-[9px] w-[30px] text-[15px] leading-5">10°C</Fit>
      <Fit className="ml-[9px] w-[107px] text-[15px] leading-5">Mayorm. nubla...</Fit>
      <ChevronUp className="ml-[23px] size-[17px]" />
      <svg viewBox="0 0 16 16" className="ml-[11px] size-[15px]" fill="none" stroke="#222" strokeWidth="1.300"><path d="M1 14A13 13 0 0 1 14 1M4.500 14.500A10 10 0 0 1 14 5M8 14.500A6.500 6.500 0 0 1 14 8.500M11.500 14.500a3 3 0 0 1 3-3" /></svg>
      <svg viewBox="0 0 16 18" className="ml-[9px] h-[17px] w-[15px]" fill="none" stroke="#222" strokeWidth="1.400"><rect x="2" y="5" width="8.500" height="8" rx="1" /><path d="M10.500 8l3-2v6l-3-2M3.500 2.500C6 1 9 1 11.500 2.500M3.500 15.500c2.500 1.500 5.500 1.500 8 0" /></svg>
      <Mic className="ml-[8px] size-[18px]" fill="#222" />
      <svg viewBox="0 0 18 14" className="ml-[7px] w-[18px]" fill="none" stroke="#222" strokeWidth="1.500"><path d="M7 3h9v8H5V8M2 1v3M5 1v3M1 4h5v1.500a2 2 0 0 1-2.500 2V9" /><path d="M8 5h7v4H8z" fill="#222" /></svg>
      <svg viewBox="0 0 18 16" className="ml-[7px] w-[18px]" fill="none" stroke="#222" strokeWidth="1.300"><path d="M1 6v4h3l4 4V2L4 6zM10.500 5.500a4 4 0 0 1 0 5M12.500 3.500a7 7 0 0 1 0 9M15 1.500a10 10 0 0 1 0 13" /></svg>
      <div className="ml-[6px] flex w-[60px] flex-col items-center text-[13.500px] leading-[19px]">
        <Fit className="w-[27px]">19:29</Fit><Fit className="w-[60px]">14/10/2023</Fit>
      </div>
      <svg viewBox="0 0 18 18" className="ml-[16px] size-[17px]"><path d="M0 0h17v8l-6 9v-4H4v3L3 13H0z" fill="#111" /><path d="M3 4h11M3 7h11M3 10h6" stroke="#fff" strokeWidth="1.200" /><circle cx="13.500" cy="13.500" r="4" fill="#111" stroke="#d6d9eb" /></svg>
      <Sep className="ml-auto mr-[3px] h-full bg-[#aab]" />
    </div>
  );
}

/* ---------- participants ---------- */
const MutedMic = ({ className = '' }: P) => (
  <svg viewBox="0 0 16 16" className={`size-4 shrink-0 ${className}`} fill="none" stroke="#e6e6e6" strokeWidth="1.200"><rect x="5" y="0" width="6" height="9.500" rx="3" fill="#e6e6e6" stroke="none" /><path d="M3 7.500a5 5 0 0 0 10 0M8 12.500V16" /><path d="M0 .5l15.500 15" stroke="#1f1f1f" strokeWidth="3" /><path d="M0 .5l15.500 15" /></svg>
);

function Person({ avatar, speaking, children, row }: { avatar: string; speaking?: boolean; children: ReactNode; row: ReactNode }) {
  return (
    <div className={`w-[138px] ${speaking ? '' : 'relative z-10'}`}>
      <div className="flex h-[88px] justify-center">
        <span className={`flex size-[88px] items-center justify-center rounded-full text-[33px] font-semibold ${speaking ? 'outline-[3px] outline-offset-[3px] outline-[#7f85f5] shadow-[0_0_70px_36px_rgba(98,100,167,0.280)]' : ''} ${avatar}`}>{children}</span>
      </div>
      <div className="relative z-10 mt-[9px] flex h-5 items-center pl-[11px] text-[15px] leading-5 text-[#f0f0f0]">{row}</div>
    </div>
  );
}

function Participants() {
  return (
    <aside className="flex w-[367px] flex-col pl-[65px] pt-[116px]">
      <div className="flex flex-wrap justify-center gap-y-[20px] px-[13px]">
        <Person avatar="bg-[#dde3d7] text-[#2f4720]" row={<><Fit className="w-[79px]">Xavier (Gu...</Fit><MutedMic className="ml-[20px]" /></>}>X</Person>
        <Person avatar="bg-[#c7d3e6] text-[#0a2a5c]" row={<Fit className="ml-[13px] w-[88px]">Pablo (Guest)</Fit>}>P</Person>
        <Person speaking avatar="bg-[#949494]" row={<Fit className="w-[110px]">MYRIAM JOHA...</Fit>}>
          <svg viewBox="0 0 40 46" className="w-10" fill="none" stroke="#fff" strokeWidth="2.500"><circle cx="20" cy="12" r="10.300" /><path d="M6 27h28a4.500 4.500 0 0 1 4.500 4.500C38.500 40 30 44.500 20 44.500S1.500 40 1.500 31.500A4.500 4.500 0 0 1 6 27z" /></svg>
        </Person>
        <Person speaking avatar="bg-[#cedae9] text-[#0e3560]" row={<Fit className="w-[110px]">Ariel Ortega (G...</Fit>}>AO</Person>
        <Person avatar="bg-[#d6d3e8] text-[#2b215c]" row={<><Fit className="w-[87px]">Himbher La...</Fit><MutedMic className="ml-[12px]" /></>}>HL</Person>
      </div>
      <div className="mb-[5px] mt-auto flex h-[167px] w-[302px] items-center justify-center bg-[#333]">
        <span className="flex size-[70px] items-center justify-center rounded-full bg-[#daf0f2] text-[27px] font-semibold text-[#2c6668]">M</span>
      </div>
    </aside>
  );
}

export default function App() {
  return (
    <div className="flex h-[1020px] w-[1920px] flex-col overflow-hidden bg-[#3b3b3b] font-['Open_Sans','Noto_Sans',sans-serif]">
      <TabStrip />
      <AddressRow />
      <div className="flex h-[932px]">
        <div className="w-[1865px] shrink-0">
          <Bookmarks />
          <main className="ml-[5px] flex h-[885px] w-[1860px] flex-col overflow-hidden rounded-[9px] bg-[#1f1f1f]">
            <CallHeader />
            <div className="relative flex h-[810px] pl-[65px] pt-[5px]">
              <section className="relative z-10 flex h-[800px] w-[1423px] shrink-0 flex-col overflow-hidden bg-white">
                <SharedTabs />
                <SharedAddress />
                <WordHeader />
                <Ribbon />
                <HorizontalRuler />
                <Document />
                <StatusBar />
                <Taskbar />
              </section>
              <Participants />
              <div className="absolute left-[15px] top-[765px] z-20 flex gap-[10px] text-white">
                <span className="flex h-[30px] w-[298px] items-center rounded bg-black/50 text-[15.500px] leading-5"><Fit className="ml-2 w-[283px]">MYRIAM JOHANNA JARAMILLO VILATUÑA</Fit></span>
                <span className="flex h-[30px] w-[83px] items-center rounded bg-black/50"><Minus className="ml-[12px] size-5 text-white/60" strokeWidth={1.500} /><Plus className="ml-[19px] size-5" strokeWidth={1.500} /></span>
              </div>
            </div>
          </main>
        </div>
        <Sidebar />
      </div>
    </div>
  );
}
